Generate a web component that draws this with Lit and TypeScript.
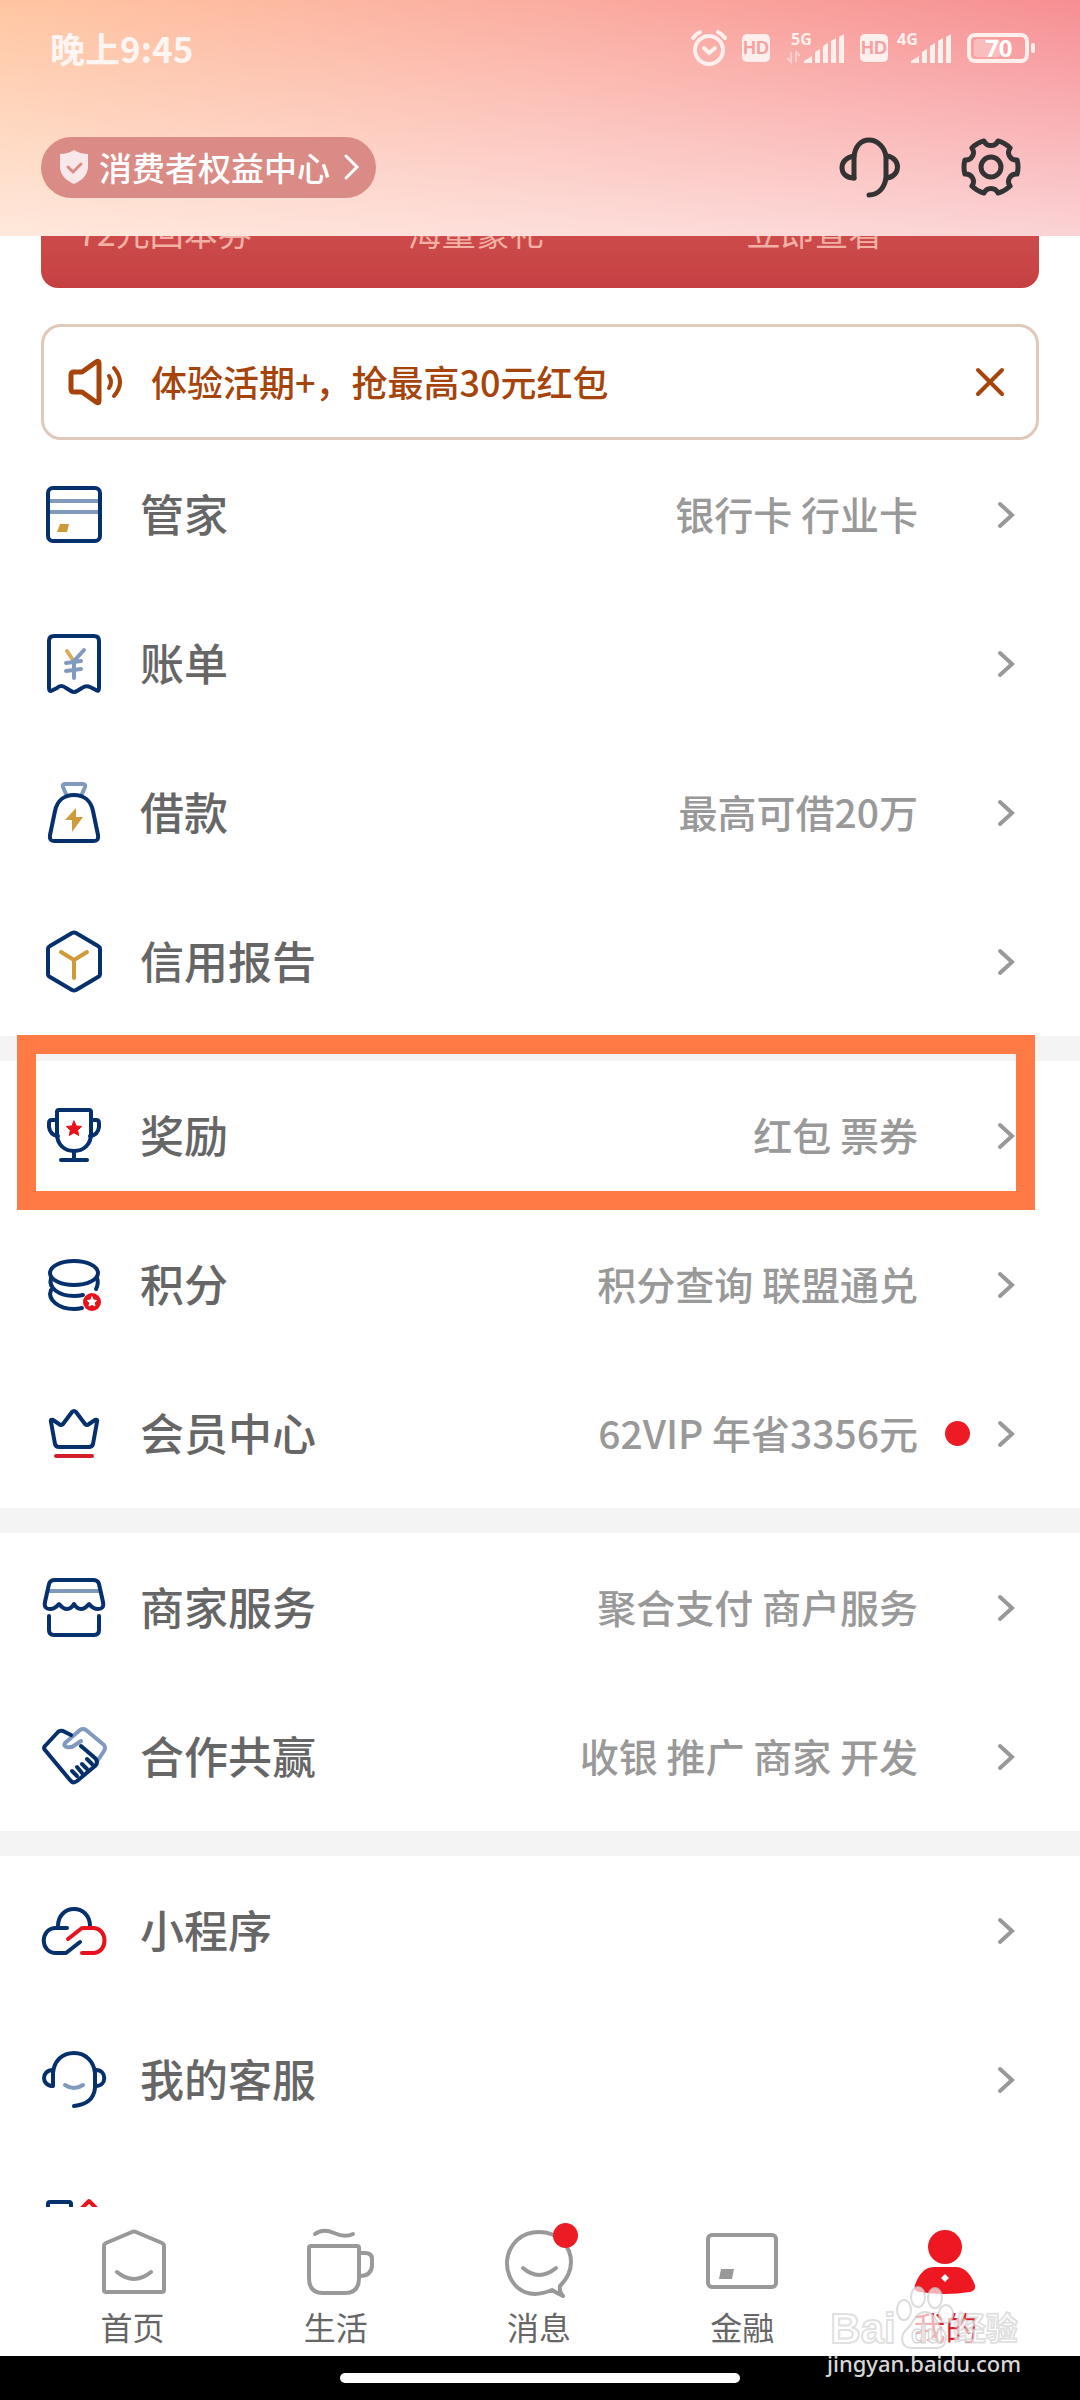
import { LitElement, html, css, svg, nothing } from "lit";
import type { SVGTemplateResult, TemplateResult } from "lit";
import { customElement, property, state } from "lit/decorators.js";
import { classMap } from "lit/directives/class-map.js";

const STEEL = "#8099bd";
const GOLD = "#cf9a38";
const RED = "#e8111c";

/** Points of a five-pointed star. */
function star(cx: number, cy: number, r: number): string {
  return Array.from({ length: 10 }, (_, i) => {
    const a = (-90 + i * 36) * (Math.PI / 180);
    const rr = i % 2 ? r * 0.48 : r;
    return `${(cx + rr * Math.cos(a)).toFixed(2)},${(cy + rr * Math.sin(a)).toFixed(2)}`;
  }).join(" ");
}

/** Outline of a cog with six rounded notches. */
function cog(c: number, r: number): string {
  const at = (deg: number) => {
    const a = (deg * Math.PI) / 180;
    return `${(c + r * Math.cos(a)).toFixed(2)} ${(c + r * Math.sin(a)).toFixed(2)}`;
  };
  let d = `M${at(-75)}`;
  for (let i = 0; i < 6; i++) {
    const base = -90 + i * 60;
    d += `A${r} ${r} 0 0 1 ${at(base + 45)}A7.6 7.6 0 0 0 ${at(base + 75)}`;
  }
  return d + "Z";
}

const icons: Record<string, SVGTemplateResult> = {
  card: svg`
    <path d="M8 20H60M8 31H60" stroke=${STEEL} />
    <rect x="8" y="7" width="52" height="53" rx="5" />
    <path d="M20 43H29L27 51H17Z" fill=${GOLD} stroke="none" />`,
  bill: svg`
    <path d="M11 61Q9 61 9 58V11Q9 6 14 6H54Q59 6 59 11V58Q59 62 56 60L50 57Q46 55 42 58L37 61Q34 63 31 61L26 58Q21 54 17 58Z" />
    <path d="M27 21L33 30" stroke="#d8ab5c" />
    <path d="M44 20L34 31V48M26 33L41 31M26 41L41 39" stroke=${STEEL} />`,
  bag: svg`
    <path d="M26 15L23 8Q22 5 25 5H43Q46 5 45 8L42 15" stroke=${STEEL} />
    <path d="M34 16C44 16 51 22 53 32L58 56Q59 62 54 62H14Q9 62 10 56L15 32C17 22 24 16 34 16Z" />
    <path d="M36 29L25 41H32L32 53L43 38H36Z" fill=${GOLD} stroke="none" />`,
  cube: svg`
    <path d="M32 5Q34 4 36 5L58 18Q60 19 60 21V46Q60 48 58 49L36 62Q34 63 32 62L10 49Q8 48 8 46V21Q8 19 10 18Z" />
    <path d="M21 24L34 32L47 24M34 32V50" stroke=${GOLD} />`,
  cup: svg`
    <path d="M19 8H49Q51 8 51 10V32C51 43 43 49 34 49S17 43 17 32V10Q17 8 19 8ZM34 49V58M21 58H47" />
    <path d="M17 18H12Q9 18 9 21V25Q10 33 18 34M51 18H56Q59 18 59 21V25Q58 33 50 34" />
    <polygon points=${star(34, 27, 8)} fill=${RED} stroke=${RED} stroke-width="1" />`,
  coins: svg`
    <ellipse cx="34" cy="22" rx="24" ry="12" />
    <path d="M11 27C8 37 19 45 34 45Q39 45 43 44M57 27Q59 32 56 38M11 39C7 49 19 58 34 58Q38 58 42 57" />
    <circle cx="52" cy="51" r="9" fill=${RED} stroke="none" />
    <polygon points=${star(52, 51, 5)} fill="#fff" stroke="#fff" stroke-width="1" />`,
  crown: svg`
    <path d="M32 12Q34 10 36 12L45 24Q47 26 49 24L55 20Q58 19 57 22L53 44Q52 47 49 47H19Q16 47 15 44L11 22Q10 19 13 20L19 24Q21 26 23 24Z" />
    <path d="M16 56H52" stroke="#d2202a" />`,
  shop: svg`
    <path d="M9 17H59" stroke=${STEEL} />
    <path d="M15 6H53Q58 6 59 10L63 28C64 33 62 35 58 35Q53 35 49 30Q45 35 41 35T34 30Q31 35 27 35T19 30Q15 35 10 35C6 35 4 33 5 28L9 10Q10 6 15 6Z" />
    <path d="M9 42V56Q9 61 14 61H54Q59 61 59 56V42" />`,
  hands: svg`
    <path d="M58 37L64 28Q66 25 64 22L46 7Q43 5 40 7L25 20Q23 23 27 24Q32 25 35 22L41 18" stroke=${STEEL} />
    <path d="M31 12L23 8Q20 7 18 9L5 23Q3 25 5 27L30 57Q33 61 37 58L55 43Q59 39 55 35L41 23" />
    <path d="M47 36L52 41M42 41L47 46M37 44L42 50M32 48L37 53" />`,
  cloud: svg`
    <path d="M18 29C18 19 25 12 34 12S50 19 50 29M27 31H15C0 32 0 55 15 56H26L40 45" />
    <path d="M28 42L42 31H54C68 32 68 55 54 56H42" stroke=${RED} />`,
  support: svg`
    <path d="M13 39V27C14 15 22 7 34 7S54 16 55 27V42C54 53 46 59 34 60" />
    <path d="M13 24C1 24 1 40 13 40M56 24C67 24 67 40 56 40" />
    <path d="M25 39Q34 45 43 39" stroke=${STEEL} />`,
  apps: svg`
    <rect x="8" y="7" width="23" height="23" rx="2" />
    <path d="M37 18L49 6L61 18L49 30Z" stroke=${RED} />`,
};

interface Entry {
  icon: string;
  title: string;
  detail?: string;
  dot?: boolean;
}

const groups: Entry[][] = [
  [
    { icon: "card", title: "管家", detail: "银行卡 行业卡" },
    { icon: "bill", title: "账单" },
    { icon: "bag", title: "借款", detail: "最高可借20万" },
    { icon: "cube", title: "信用报告" },
  ],
  [
    { icon: "cup", title: "奖励", detail: "红包 票券" },
    { icon: "coins", title: "积分", detail: "积分查询 联盟通兑" },
    { icon: "crown", title: "会员中心", detail: "62VIP 年省3356元", dot: true },
  ],
  [
    { icon: "shop", title: "商家服务", detail: "聚合支付 商户服务" },
    { icon: "hands", title: "合作共赢", detail: "收银 推广 商家 开发" },
  ],
  [
    { icon: "cloud", title: "小程序" },
    { icon: "support", title: "我的客服" },
  ],
];

@customElement("menu-row")
class MenuRow extends LitElement {
  @property({ attribute: false }) entry!: Entry;

  static styles = css`
    :host {
      display: block;
    }
    .row {
      display: flex;
      align-items: center;
      height: 149px;
      padding: 0 64px 0 40px;
      color: #666;
      text-decoration: none;
    }
    .icon {
      flex: none;
      margin-right: 32px;
      fill: none;
      stroke: #06306b;
      stroke-width: 4;
      stroke-linecap: round;
      stroke-linejoin: round;
    }
    .title,
    .detail {
      padding-bottom: 4px;
      font-weight: 500;
      white-space: nowrap;
    }
    .title {
      flex: 1;
      font-size: 44px;
      line-height: 60px;
    }
    .detail {
      font-size: 39px;
      line-height: 54px;
      color: #999;
    }
    .slot {
      display: flex;
      justify-content: center;
      width: 78px;
    }
    .dot {
      width: 25px;
      height: 25px;
      border-radius: 50%;
      background: #ed1b23;
    }
    .go {
      flex: none;
      fill: none;
      stroke: #999;
      stroke-width: 4;
      stroke-linecap: round;
    }
  `;

  render() {
    const e = this.entry;
    return html`<a class="row" href="#">
      <svg class="icon" width="68" height="68" viewBox="0 0 68 68" aria-hidden="true">${icons[e.icon]}</svg>
      <span class="title">${e.title}</span>
      ${e.detail ? html`<span class="detail">${e.detail}</span>` : nothing}
      <span class="slot">${e.dot ? html`<span class="dot"></span>` : nothing}</span>
      <svg class="go" width="20" height="28" viewBox="0 0 20 28" aria-hidden="true"><path d="M4 3L16 14L4 25" /></svg>
    </a>`;
  }
}

const signal = svg`<path d="M0 29V27Q5 24 8 22V29ZM11 29V18L16 15V29ZM19 29V12L24 9V29ZM27 29V7L32 4V29ZM35 29V3L40 0V29Z" />`;

const tabs: { label: string; badge?: boolean; art: SVGTemplateResult }[] = [
  {
    label: "首页",
    art: svg`<path d="M38 6Q40 5 42 6L68 17Q70 18 70 20V64Q70 66 68 66H12Q10 66 10 64V20Q10 18 12 17Z" />
      <path d="M23 46Q40 60 57 46" />`,
  },
  {
    label: "生活",
    art: svg`<path d="M14 20H60Q62 20 62 22V52Q62 67 48 67H26Q12 67 12 52V22Q12 20 14 20Z" />
      <path d="M62 27H68Q75 27 75 33V40Q74 50 63 50M18 8Q26 2 37 7T56 8" />`,
  },
  {
    label: "消息",
    badge: true,
    art: svg`<path d="M52 64C21 77 6 54 7 35C9 17 22 6 39 6C58 6 71 20 71 36C71 46 66 54 60 60Q59 66 63 70Q57 67 52 64Z" />
      <path d="M23 42Q39 56 56 42" />`,
  },
  {
    label: "金融",
    art: svg`<rect x="5" y="9" width="68" height="52" rx="4" />
      <path d="M18 43H31L29 53H16Z" fill="#999" stroke="none" />`,
  },
  {
    label: "我的",
    art: svg`<g fill="#ed1821" stroke="none"><circle cx="39" cy="21" r="17" />
      <path d="M28 41H50C60 41 66 51 69 59Q70 65 64 66Q39 70 14 66Q7 65 9 59C12 50 18 41 28 41Z" /></g>
      <path d="M39 48L43 52L39 56L35 52Z" fill="#fff" stroke="none" />`,
  },
];

@customElement("app-root")
class AppRoot extends LitElement {
  @state() private active = 4;
  @state() private noticeOpen = true;

  static styles = css`
    :host {
      display: block;
      font-family: "Noto Sans CJK SC", "Noto Sans", sans-serif;
      background: #fff;
    }
    * {
      box-sizing: border-box;
    }
    button {
      margin: 0;
      padding: 0;
      border: 0;
      background: none;
      font: inherit;
      color: inherit;
    }
    svg {
      display: block;
      flex: none;
      overflow: visible;
    }
    .page {
      position: relative;
      display: flex;
      flex-direction: column;
      min-height: 100vh;
    }
    .header {
      height: 236px;
      background:
        linear-gradient(to bottom, rgba(255, 255, 255, 0), rgba(255, 255, 255, 0.62)),
        linear-gradient(100deg, #ffc6a2, #fbaca0 50%, #f68c92);
    }
    .status {
      display: flex;
      align-items: center;
      height: 96px;
      padding: 0 45px 0 50px;
      color: #fff5f2;
      fill: #fff0ee;
    }
    .clock {
      flex: 1;
      font-size: 35px;
      font-weight: 700;
      line-height: 48px;
    }
    .line {
      fill: none;
      stroke: #fff0ee;
      stroke-width: 4;
      stroke-linecap: round;
    }
    .alarm {
      margin-right: 15px;
    }
    .hd {
      width: 28px;
      height: 28px;
      border-radius: 5px;
      background: #fff0ee;
      color: #f7a09f;
      font: 700 18px/28px "Liberation Sans", sans-serif;
      text-align: center;
    }
    .net {
      margin: 0 16px;
    }
    .net.second {
      margin-left: 9px;
    }
    .net text {
      font: 700 16px "Open Sans", sans-serif;
    }
    .battery text {
      font: 700 24px "Open Sans", sans-serif;
      fill: #fff;
    }
    .actions {
      display: flex;
      align-items: center;
      height: 142px;
      padding: 0 56px 0 41px;
    }
    .rights {
      display: flex;
      align-items: center;
      height: 61px;
      padding: 0 14px 0 18px;
      border-radius: 31px;
      background: #da8b86;
      color: #fff;
      font-size: 33px;
      font-weight: 500;
      line-height: 48px;
      text-decoration: none;
    }
    .rights svg:first-child {
      margin-right: 10px;
    }
    .rights svg:last-child {
      margin-left: 12px;
    }
    .tools {
      display: flex;
      gap: 55px;
      margin-left: auto;
    }
    .tools svg {
      fill: none;
      stroke: #333;
      stroke-width: 5;
      stroke-linecap: round;
      stroke-linejoin: round;
    }
    .promo {
      display: grid;
      grid-template-columns: 329fr 338fr 292fr;
      align-content: end;
      height: 52px;
      margin: 0 41px;
      padding: 0 0 39px 37px;
      overflow: hidden;
      border-radius: 0 0 17px 17px;
      background: linear-gradient(#cc4b4a, #c64042);
      color: #f3b0a4;
      font-size: 34px;
      font-weight: 400;
      line-height: 34px;
    }
    .notice {
      display: flex;
      align-items: center;
      height: 116px;
      margin: 36px 41px 0;
      padding: 0 30px 0 24px;
      border: 3px solid #e0c9ba;
      border-radius: 20px;
      color: #a6440b;
      font-size: 36px;
      font-weight: 500;
      line-height: 52px;
    }
    .notice svg {
      fill: none;
      stroke: #a6440b;
      stroke-width: 5;
      stroke-linecap: round;
      stroke-linejoin: round;
    }
    .notice .close svg {
      stroke-width: 4;
    }
    .notice p {
      flex: 1;
      margin: 0 0 0 23px;
      padding-bottom: 2px;
    }
    .group {
      position: relative;
    }
    .group + .group {
      border-top: 25px solid #f4f4f4;
    }
    .mark {
      position: absolute;
      top: -26px;
      left: 17px;
      right: 45px;
      height: 175px;
      border: 19px solid #ff7a45;
      pointer-events: none;
    }
    .peek {
      flex: none;
      height: 53px;
      padding: 41px 0 0 40px;
      overflow: hidden;
    }
    .peek svg {
      fill: none;
      stroke: #06306b;
      stroke-width: 4;
      stroke-linecap: round;
      stroke-linejoin: round;
    }
    .tabs {
      display: grid;
      grid-template-columns: repeat(5, 1fr);
      height: 149px;
      margin-top: auto;
      padding: 0 33px 0 31px;
      background: #fff;
    }
    .tab {
      display: flex;
      flex-direction: column;
      align-items: center;
      padding-top: 19px;
      color: #666;
      font-size: 32px;
      line-height: 44px;
    }
    .tab.active {
      color: #d9202a;
    }
    .art {
      position: relative;
      height: 78px;
    }
    .art svg {
      fill: none;
      stroke: #999;
      stroke-width: 4;
      stroke-linecap: round;
      stroke-linejoin: round;
    }
    .badge {
      position: absolute;
      top: -3px;
      right: 0;
      width: 25px;
      height: 25px;
      border-radius: 50%;
      background: #ed1b23;
    }
    .gesture {
      display: flex;
      justify-content: center;
      height: 44px;
      padding-top: 17px;
      background: #000;
    }
    .pill {
      width: 37%;
      height: 10px;
      border-radius: 5px;
      background: #fff;
    }
    .credit {
      position: absolute;
      right: 59px;
      bottom: 23px;
      display: flex;
      flex-direction: column;
      align-items: center;
      color: rgba(255, 255, 255, 0.7);
      pointer-events: none;
    }
    .brand {
      display: flex;
      align-items: flex-end;
      height: 66px;
      font: 700 42px/42px "Liberation Sans", "Noto Sans CJK SC", sans-serif;
      -webkit-text-stroke: 2px rgba(205, 205, 205, 0.6);
    }
    .brand .cn {
      font-size: 32px;
    }
    .site {
      font: 500 22px/27px "Noto Sans", sans-serif;
      color: #d8d8d8;
    }
  `;

  private renderStatus(): TemplateResult {
    return html`<div class="status">
      <span class="clock">晚上9:45</span>
      <svg class="alarm line" width="36" height="36" viewBox="0 0 36 36" aria-label="闹钟">
        <circle cx="18" cy="20" r="14" />
        <path d="M2 8Q5 4 9 2M34 8Q31 4 27 2M13 18L18 23L24 18" />
      </svg>
      <span class="hd">HD</span>
      <svg class="net" width="58" height="34" viewBox="0 0 58 34" aria-label="5G">
        <text x="5" y="14">5G</text>
        <path d="M5 21V31L1 27M10 31V21L14 25" fill="none" stroke="#fff0ee" stroke-opacity=".5" stroke-width="2" />
        <g transform="translate(18 3)">${signal}</g>
      </svg>
      <span class="hd">HD</span>
      <svg class="net second" width="54" height="34" viewBox="0 0 54 34" aria-label="4G">
        <text x="0" y="14">4G</text>
        <g transform="translate(14 3)">${signal}</g>
      </svg>
      <svg class="battery" width="68" height="30" viewBox="0 0 68 30" aria-label="电量">
        <rect class="line" x="2" y="2" width="58" height="26" rx="6" />
        <rect x="7" y="6" width="26" height="18" rx="3" fill-opacity=".35" />
        <rect x="64" y="10" width="4" height="10" rx="2" />
        <text x="18" y="24">70</text>
      </svg>
    </div>`;
  }

  render() {
    return html`<div class="page">
      <header class="header">
        ${this.renderStatus()}
        <div class="actions">
          <a class="rights" href="#">
            <svg width="30" height="34" viewBox="0 0 30 34" aria-hidden="true">
              <path d="M15 0Q21 4 29 4V18C28 26 22 31 15 34C8 31 2 26 1 18V4Q9 4 15 0Z" fill="#f8e8ea" />
              <path d="M9 17L14 22L22 14" fill="none" stroke="#da8b86" stroke-width="3" stroke-linecap="round" />
            </svg>
            <span>消费者权益中心</span>
            <svg width="20" height="30" viewBox="0 0 20 30" aria-hidden="true">
              <path d="M4 4L15 15L4 26" fill="none" stroke="#fff" stroke-width="3" stroke-linecap="round" />
            </svg>
          </a>
          <div class="tools">
            <button aria-label="客服">
              <svg width="66" height="66" viewBox="0 0 66 66">
                <path d="M17 44V23C18 12 24 6 32 6S48 13 49 23V43C48 54 41 61 32 61" />
                <path d="M17 22C1 24 1 44 17 44M50 22C64 24 64 42 50 44" />
              </svg>
            </button>
            <button aria-label="设置">
              <svg width="66" height="66" viewBox="0 0 66 66">
                <path d=${cog(33, 27)} /><circle cx="33" cy="33" r="10" />
              </svg>
            </button>
          </div>
        </div>
      </header>

      <section class="promo">
        <span>72元回本券</span><span>海量豪礼</span><span>立即查看</span>
      </section>

      ${this.noticeOpen
        ? html`<section class="notice">
            <svg width="60" height="48" viewBox="0 0 60 48" aria-hidden="true">
              <path d="M6 14H14L28 4Q31 2 31 5V43Q31 46 28 44L14 34H6Q3 34 3 31V17Q3 14 6 14Z" />
              <path d="M41 18Q45 24 41 30M46 10Q58 24 46 38" stroke-width="4" />
            </svg>
            <p>体验活期+，抢最高30元红包</p>
            <button class="close" aria-label="关闭" @click=${() => (this.noticeOpen = false)}>
              <svg width="32" height="32" viewBox="0 0 32 32"><path d="M4 4L28 28M28 4L4 28" /></svg>
            </button>
          </section>`
        : nothing}

      <main>
        ${groups.map(
          (g, i) => html`<section class="group">
            ${g.map((e) => html`<menu-row .entry=${e}></menu-row>`)}
            ${i === 1 ? html`<div class="mark"></div>` : nothing}
          </section>`,
        )}
      </main>
      <div class="peek">
        <svg width="68" height="68" viewBox="0 0 68 68" aria-hidden="true">${icons.apps}</svg>
      </div>

      <nav class="tabs">
        ${tabs.map(
          (t, i) => html`<button
            class=${classMap({ tab: true, active: i === this.active })}
            @click=${() => (this.active = i)}
          >
            <span class="art">
              <svg width="78" height="74" viewBox="0 0 78 74" aria-hidden="true">${t.art}</svg>
              ${t.badge ? html`<span class="badge"></span>` : nothing}
            </span>
            <span>${t.label}</span>
          </button>`,
        )}
      </nav>
      <div class="gesture"><span class="pill"></span></div>

      <div class="credit">
        <div class="brand">
          <span>Bai</span>
          <svg width="58" height="64" viewBox="0 0 58 64" aria-label="du">
            <g fill="#fff" fill-opacity=".65" stroke="#cdcdcd" stroke-opacity=".7" stroke-width="2">
              <ellipse cx="8" cy="24" rx="7" ry="10" /><ellipse cx="22" cy="11" rx="7" ry="10" />
              <ellipse cx="39" cy="12" rx="7" ry="10" /><ellipse cx="50" cy="28" rx="7" ry="9" />
              <path d="M29 26C38 26 40 36 46 43C53 50 50 62 41 62H16C5 62 3 50 11 43C18 36 20 26 29 26Z" />
            </g>
            <text x="15" y="57" font-size="26" fill="#fff" fill-opacity=".6" stroke="#cdcdcd">du</text>
          </svg>
          <span class="cn">经验</span>
        </div>
        <div class="site">jingyan.baidu.com</div>
      </div>
    </div>`;
  }
}
